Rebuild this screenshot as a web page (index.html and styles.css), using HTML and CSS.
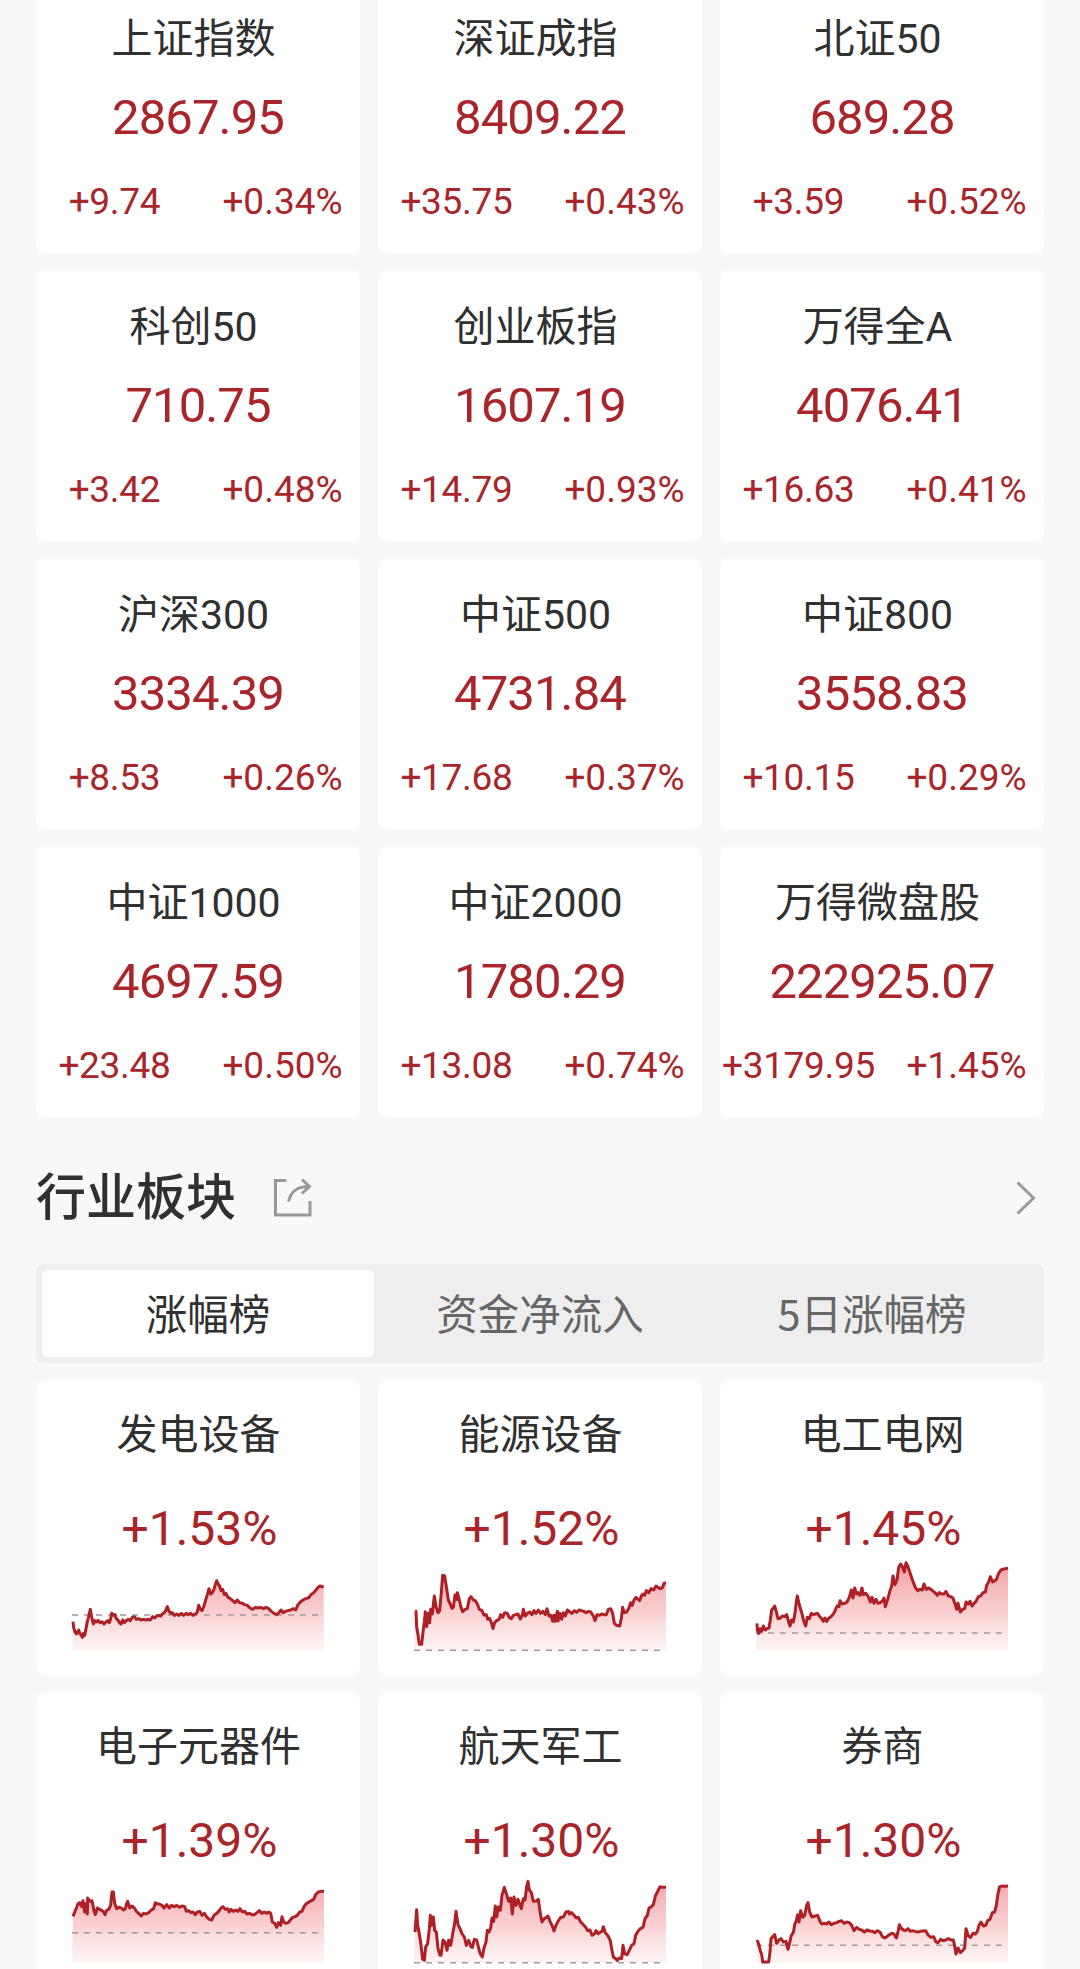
FILE: index.html
```html
<!DOCTYPE html>
<html lang="zh-CN">
<head>
    <meta charset="UTF-8">
    <meta name="viewport" content="width=device-width, initial-scale=1.0">
    <title>行情 - 指数与行业板块</title>
    <link rel="stylesheet" href="styles.css">
</head>
<body>
    <main class="page">
        <section class="card-grid">
            <div class="card index-card">
                <h3>上证指数</h3>
                <div class="value">2867.95</div>
                <div class="change"><span class="diff">+9.74</span><span class="percent">+0.34%</span></div>
            </div>
            <div class="card index-card">
                <h3>深证成指</h3>
                <div class="value">8409.22</div>
                <div class="change"><span class="diff">+35.75</span><span class="percent">+0.43%</span></div>
            </div>
            <div class="card index-card">
                <h3>北证50</h3>
                <div class="value">689.28</div>
                <div class="change"><span class="diff">+3.59</span><span class="percent">+0.52%</span></div>
            </div>
            <div class="card index-card">
                <h3>科创50</h3>
                <div class="value">710.75</div>
                <div class="change"><span class="diff">+3.42</span><span class="percent">+0.48%</span></div>
            </div>
            <div class="card index-card">
                <h3>创业板指</h3>
                <div class="value">1607.19</div>
                <div class="change"><span class="diff">+14.79</span><span class="percent">+0.93%</span></div>
            </div>
            <div class="card index-card">
                <h3>万得全A</h3>
                <div class="value">4076.41</div>
                <div class="change"><span class="diff">+16.63</span><span class="percent">+0.41%</span></div>
            </div>
            <div class="card index-card">
                <h3>沪深300</h3>
                <div class="value">3334.39</div>
                <div class="change"><span class="diff">+8.53</span><span class="percent">+0.26%</span></div>
            </div>
            <div class="card index-card">
                <h3>中证500</h3>
                <div class="value">4731.84</div>
                <div class="change"><span class="diff">+17.68</span><span class="percent">+0.37%</span></div>
            </div>
            <div class="card index-card">
                <h3>中证800</h3>
                <div class="value">3558.83</div>
                <div class="change"><span class="diff">+10.15</span><span class="percent">+0.29%</span></div>
            </div>
            <div class="card index-card">
                <h3>中证1000</h3>
                <div class="value">4697.59</div>
                <div class="change"><span class="diff">+23.48</span><span class="percent">+0.50%</span></div>
            </div>
            <div class="card index-card">
                <h3>中证2000</h3>
                <div class="value">1780.29</div>
                <div class="change"><span class="diff">+13.08</span><span class="percent">+0.74%</span></div>
            </div>
            <div class="card index-card">
                <h3>万得微盘股</h3>
                <div class="value">222925.07</div>
                <div class="change"><span class="diff">+3179.95</span><span class="percent">+1.45%</span></div>
            </div>
        </section>

        <header class="section-header">
            <h2>行业板块</h2>
            <svg class="share-icon" viewBox="0 0 40 40">
                <path d="M13.5 2.5H2.5V37H37V23"/>
                <path d="M15.500 23.500C18 13 24 8.500 36 8.500M29 1.500L36.500 8.500L29 15.500"/>
            </svg>
            <svg class="arrow-icon" viewBox="0 0 20 34">
                <path d="M1.500 1.500L17.500 17L1.500 32.500"/>
            </svg>
        </header>

        <nav class="tabs">
            <button class="tab active">涨幅榜</button>
            <button class="tab">资金净流入</button>
            <button class="tab">5日涨幅榜</button>
        </nav>

        <section class="card-grid">
            <div class="card sector-card">
                <h3>发电设备</h3>
                <div class="value">+1.53%</div>
                <svg class="chart" data-chart="power"></svg>
            </div>
            <div class="card sector-card">
                <h3>能源设备</h3>
                <div class="value">+1.52%</div>
                <svg class="chart" data-chart="energy"></svg>
            </div>
            <div class="card sector-card">
                <h3>电工电网</h3>
                <div class="value">+1.45%</div>
                <svg class="chart" data-chart="grid"></svg>
            </div>
            <div class="card sector-card">
                <h3>电子元器件</h3>
                <div class="value">+1.39%</div>
                <svg class="chart" data-chart="components"></svg>
            </div>
            <div class="card sector-card">
                <h3>航天军工</h3>
                <div class="value">+1.30%</div>
                <svg class="chart" data-chart="defense"></svg>
            </div>
            <div class="card sector-card">
                <h3>券商</h3>
                <div class="value">+1.30%</div>
                <svg class="chart" data-chart="broker"></svg>
            </div>
        </section>
    </main>

    <script>
        // base = y of the previous close line, points = x,y pairs
        const charts = {
            power: {
                base: 195,
                points: '3,215 5,232 9,246 13,252 17,246 20,240 24,252 28,256 31,262 34,250 38,256 42,236 46,214 50,200 53,186 55,178 58,196 61,210 64,222 68,212 73,216 78,211 84,218 90,215 96,222 102,216 107,212 112,218 116,206 119,190 124,196 129,194 133,206 138,210 142,218 147,222 152,210 157,218 163,212 169,208 175,212 181,202 187,200 193,208 200,206 207,210 214,208 221,210 228,208 235,210 242,200 248,204 254,198 260,196 266,198 271,192 277,188 281,182 286,170 291,184 296,190 301,188 307,196 314,192 321,196 328,190 335,196 342,190 349,194 356,190 363,196 370,192 376,186 380,166 385,178 390,182 396,168 401,150 406,134 411,116 416,132 421,128 426,118 430,104 434,92 438,102 443,108 447,122 452,118 457,134 462,130 468,142 475,146 482,152 489,158 496,150 503,158 511,160 518,164 526,166 534,174 542,178 550,172 558,174 566,172 574,176 582,172 590,176 598,184 606,190 614,194 621,188 627,180 633,188 640,184 648,182 656,180 664,176 671,180 678,164 685,156 693,150 701,146 709,144 717,134 725,128 732,120 738,112 744,108 755,111'
            },
            energy: {
                base: 301,
                points: '3,182 6,184 7,205 8,230 12,255 16,283 23,283 26,255 31,215 34,185 38,230 43,190 47,218 50,178 55,192 61,138 66,170 72,188 77,182 82,128 86,76 92,78 97,110 103,150 108,160 114,175 118,172 123,135 129,148 130,128 136,150 141,172 146,185 153,178 160,176 166,146 171,140 178,150 184,152 190,162 196,178 204,182 210,195 217,194 221,208 227,205 232,218 237,236 242,218 248,212 255,208 260,194 266,202 272,188 280,190 286,203 292,206 298,196 305,194 312,192 319,207 325,196 328,178 334,198 340,190 347,186 354,194 360,182 366,190 373,180 380,190 387,184 394,194 399,176 405,198 411,196 416,214 420,196 424,214 430,184 432,213 438,190 443,208 448,188 454,198 460,180 467,186 474,190 481,182 488,187 495,180 502,182 509,184 516,188 524,184 530,186 537,196 543,212 549,194 556,196 563,192 570,194 577,194 583,178 590,176 596,190 601,220 608,226 617,228 622,205 626,172 631,188 638,186 645,174 650,158 655,166 660,150 666,142 672,148 677,152 682,138 687,132 692,136 697,122 704,128 711,116 719,120 726,108 732,112 739,116 746,112 750,100 756,98'
            },
            grid: {
                base: 249,
                points: '3,220 4,240 8,250 12,236 17,244 22,228 28,240 33,236 39,234 43,210 47,180 52,174 56,168 60,182 66,206 72,205 79,198 86,200 92,194 98,216 102,228 107,210 112,216 117,190 121,155 124,138 130,165 137,188 143,212 149,228 154,202 160,206 166,190 172,194 178,192 184,190 190,198 197,206 202,214 207,204 212,214 218,205 225,200 232,192 238,180 243,168 249,170 252,152 259,162 266,160 273,156 280,142 286,120 291,144 296,114 302,132 307,128 312,136 318,114 322,134 329,130 336,138 343,156 348,142 354,160 360,148 366,160 373,158 380,152 384,144 388,170 395,148 402,122 407,108 411,78 417,104 423,90 428,52 434,42 439,50 445,66 450,38 456,50 462,68 470,92 478,112 485,122 492,118 499,120 504,102 511,118 518,114 525,118 532,124 539,130 544,136 550,128 557,132 564,132 570,124 577,138 584,140 591,144 598,164 602,178 606,160 613,186 620,178 626,176 630,156 637,162 642,154 648,168 654,160 660,154 667,140 674,138 681,128 688,126 692,106 698,96 703,80 710,96 717,92 722,86 728,70 735,60 744,57 756,55'
            },
            components: {
                base: 212,
                points: '3,163 9,148 14,136 18,125 23,122 29,134 33,116 38,150 43,124 46,156 47,108 54,118 60,116 66,146 70,158 76,138 83,142 90,146 95,150 99,158 104,145 110,142 116,130 120,90 124,90 128,124 134,140 141,136 148,138 154,144 160,140 164,124 167,118 173,138 180,132 187,138 193,148 200,154 208,162 215,154 222,156 230,152 238,144 245,140 250,122 256,126 262,126 270,130 276,138 284,128 292,138 298,130 306,134 314,130 322,136 330,132 338,134 343,148 350,146 357,152 363,150 370,158 376,150 383,148 390,160 397,154 404,165 412,172 419,174 426,160 433,155 440,148 447,138 453,134 460,142 467,140 472,150 477,142 484,148 491,144 498,148 504,140 511,150 518,148 525,156 532,154 540,158 547,158 555,152 562,146 570,154 577,150 584,154 590,150 596,154 601,180 608,184 614,196 619,182 626,190 630,164 635,180 642,184 648,182 655,174 662,166 669,164 676,160 683,150 690,148 697,132 704,124 711,120 718,116 725,112 731,98 739,90 747,88 756,88'
            },
            defense: {
                base: 302,
                points: '3,210 6,170 8,143 11,190 15,210 19,235 22,258 26,292 31,295 35,255 41,245 46,200 49,160 53,190 58,165 62,205 67,210 72,260 78,280 81,280 87,234 93,240 99,265 104,235 110,250 117,210 121,190 126,148 132,188 138,200 144,215 151,225 157,250 164,235 171,254 175,256 181,232 188,234 194,258 199,276 205,285 210,258 216,240 220,205 225,210 230,198 234,168 239,178 244,132 248,165 253,135 259,145 264,100 271,76 278,98 284,118 290,108 295,156 300,105 306,130 312,112 318,130 322,140 328,110 333,114 338,74 342,58 346,84 352,92 358,118 365,118 373,112 379,155 384,180 391,170 397,166 402,162 408,178 414,190 420,207 426,190 432,178 440,166 448,165 456,150 463,148 466,156 473,152 480,160 487,168 493,166 500,180 508,188 515,196 521,206 528,204 534,220 541,216 546,206 552,215 560,210 564,208 568,194 574,212 582,222 589,236 593,260 598,285 605,290 610,295 616,288 623,290 627,250 632,275 639,278 646,265 653,250 660,245 665,220 672,208 679,200 687,196 693,170 700,160 705,138 711,135 718,128 724,102 731,88 738,74 744,76 748,76 756,76'
            },
            broker: {
                base: 250,
                points: '3,234 8,246 13,266 17,278 20,300 38,300 42,270 45,230 50,224 56,218 62,244 69,234 75,230 82,240 90,238 96,262 101,242 106,220 112,212 116,188 121,176 125,158 129,180 134,146 140,166 146,160 152,130 156,122 161,150 168,165 177,162 185,160 192,178 197,186 205,184 212,186 219,180 226,188 234,184 242,182 249,178 257,176 264,184 272,180 280,182 287,190 294,206 302,196 310,202 317,204 325,210 333,204 341,207 349,208 357,212 364,206 372,210 379,224 386,228 393,224 400,218 408,214 414,216 421,228 427,205 430,188 435,198 442,204 449,206 456,200 463,208 470,206 477,208 485,210 493,208 501,207 509,206 517,220 525,226 533,224 540,240 546,242 554,232 562,236 569,234 577,230 585,234 592,234 596,252 600,276 606,258 613,272 620,266 626,258 630,200 637,222 644,226 651,214 658,216 664,208 669,190 675,180 682,192 689,190 695,176 702,172 709,152 716,150 721,130 726,95 731,74 739,72 747,73 756,72'
            }
        };

        const gradient = `
            <defs>
                <linearGradient id="areaFill" gradientUnits="userSpaceOnUse" x1="0" y1="30" x2="0" y2="302">
                    <stop offset="0" stop-color="#f0787e" stop-opacity="0.75"/>
                    <stop offset="0.6" stop-color="#f4a3a6" stop-opacity="0.5"/>
                    <stop offset="1" stop-color="#f9d0d0" stop-opacity="0.25"/>
                </linearGradient>
            </defs>`;

        document.querySelectorAll('.chart').forEach(function(svg) {
            const chart = charts[svg.dataset.chart];
            svg.setAttribute('viewBox', '0 0 756 306');
            svg.innerHTML = gradient + `
                <polygon class="area" points="0,302 ${chart.points} 756,302"/>
                <line class="base-line" x1="0" y1="${chart.base}" x2="756" y2="${chart.base}"/>
                <polyline class="line" points="${chart.points}"/>`;
        });
    </script>
</body>
</html>
```
FILE: styles.css
```css
:root {
    --bg-color: #f8f8f8;
    --card-color: #ffffff;
    --text-color: #303030;
    --muted-color: #666666;
    --icon-color: #999999;
    --up-color: #a9252a;
}

* {
    box-sizing: border-box;
}

body {
    margin: 0;
    height: 1969px;
    overflow: hidden;
    background-color: var(--bg-color);
    color: var(--text-color);
    font-family: Roboto, 'Noto Sans CJK SC', sans-serif;
}

h2, h3 {
    margin: 0;
}

/* the list is scrolled a little, so the first row is cut at the top */
.page {
    margin-top: -17px;
    padding: 0 36px;
}

.card-grid {
    display: grid;
    grid-template-columns: repeat(3, 324px);
    gap: 18px;
}

.card {
    display: flex;
    flex-direction: column;
    align-items: center;
    background-color: var(--card-color);
    border-radius: 8px;
}

.card h3 {
    height: 60px;
    font-size: 41px;
    font-weight: 400;
    line-height: 60px;
    white-space: nowrap;
}

.value {
    color: var(--up-color);
    font-size: 49px;
    letter-spacing: -0.9px;
    line-height: 60px;
}

.index-card {
    height: 270px;
    padding-top: 26px;
}

.index-card h3 {
    padding-right: 9px;
}

.index-card .value {
    margin-top: 19px;
}

.change {
    display: flex;
    width: 100%;
    margin-top: 29px;
    color: var(--up-color);
    font-size: 37px;
    line-height: 50px;
}

.diff,
.percent {
    display: flex;
    justify-content: center;
}

.diff {
    width: 157px;
    letter-spacing: -0.3px;
}

.percent {
    flex: 1;
    padding-left: 12px;
}

.section-header {
    display: flex;
    align-items: center;
    height: 147px;
    padding: 14px 8px 0 0;
}

.section-header h2 {
    margin-top: -10px;
    font-family: 'Noto Sans CJK SC', sans-serif;
    font-size: 50px;
    font-weight: 500;
    line-height: 70px;
}

.section-header svg {
    fill: none;
    stroke: var(--icon-color);
    stroke-width: 3;
}

.share-icon {
    width: 40px;
    height: 40px;
    margin-left: 37px;
}

.arrow-icon {
    width: 20px;
    height: 34px;
    margin-left: auto;
}

.tabs {
    display: flex;
    height: 99px;
    margin-bottom: 18px;
    padding: 6px;
    background-color: #eeeeee;
    border-radius: 8px;
}

.tab {
    flex: 1;
    padding: 0 0 3px;
    border: none;
    border-radius: 6px;
    background: none;
    color: var(--muted-color);
    font-family: 'Noto Sans CJK SC', sans-serif;
    font-size: 41.5px;
    cursor: pointer;
}

.tab.active {
    background-color: var(--card-color);
    color: var(--text-color);
}

.sector-card {
    height: 294px;
    padding-top: 24px;
}

.sector-card h3 {
    padding-left: 1px;
}

.sector-card .value {
    margin-top: 34px;
    padding-left: 3px;
    font-size: 48px;
    letter-spacing: 0;
}

.chart {
    width: 252px;
    height: 102px;
    margin-top: -9px;
    overflow: visible;
}

.area {
    fill: url(#areaFill);
}

.line {
    fill: none;
    stroke: #ae2025;
    stroke-width: 9;
    stroke-linejoin: round;
}

.base-line {
    stroke: #a39a9a;
    stroke-width: 4.5;
    stroke-dasharray: 18 18;
}
```
